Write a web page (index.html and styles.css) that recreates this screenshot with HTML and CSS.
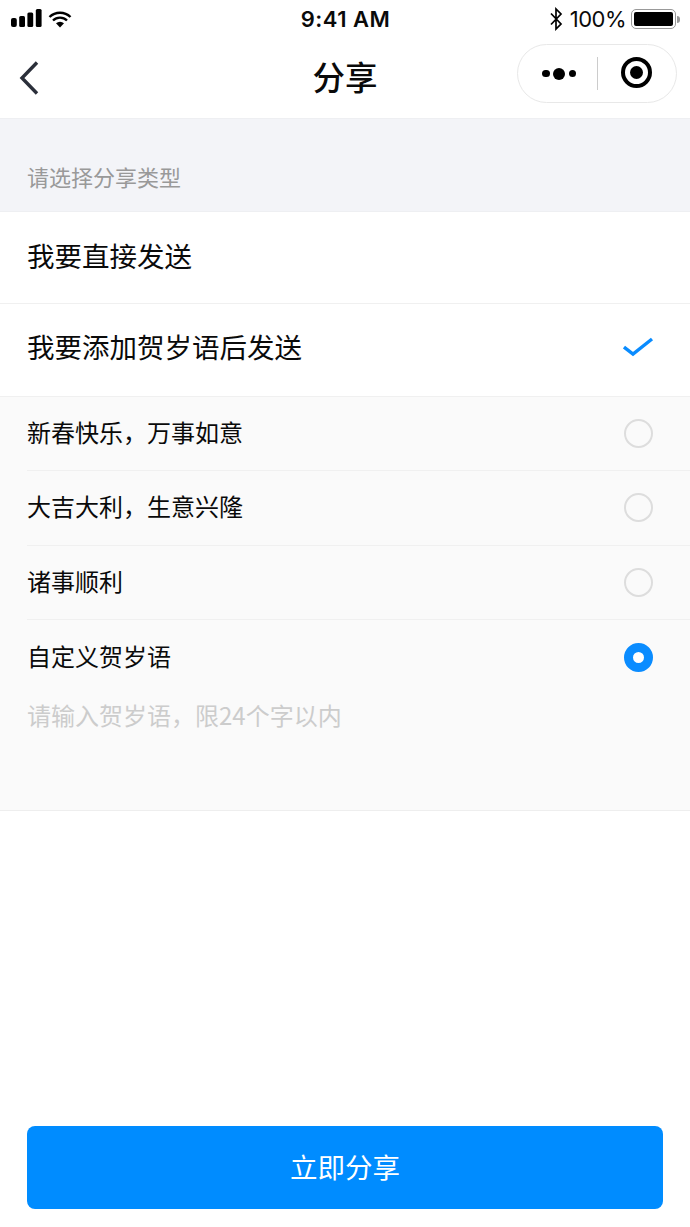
FILE: index.html
```html
<!DOCTYPE html>
<html lang="zh-CN">
<head>
<meta charset="utf-8">
<title>分享</title>
<link rel="stylesheet" href="styles.css">
</head>
<body>
<div class="page">
  <div class="status">
    <div class="status-left">
      <svg width="31" height="20" viewBox="0 0 31 20"><g fill="#000"><rect x="0" y="9" width="5.800" height="9" rx="2"/><rect x="8.200" y="7" width="5.800" height="11" rx="1.500"/><rect x="16.400" y="3.500" width="5.800" height="14.500" rx="1.500"/><rect x="24.800" y="0" width="5.800" height="18" rx="1.500"/></g></svg>
      <svg class="wifi" width="24" height="18" viewBox="0 0 24 18"><path d="M1.500 7a15 15 0 0 1 21 0M5 10.500a10 10 0 0 1 14 0" fill="none" stroke="#000" stroke-width="2.400"/><path d="M8 13.200a6 6 0 0 1 8 0L12 17.500z" fill="#000"/></svg>
    </div>
    <div class="clock">9:41 AM</div>
    <div class="status-right">
      <svg width="14" height="24" viewBox="0 0 14 24"><path d="M2 6.500l10 10.500-5 5V2l5 5L2 17.500" fill="none" stroke="#000" stroke-width="1.700"/></svg>
      <span class="pct">100%</span>
      <span class="battery"><span class="battery-fill"></span></span>
      <span class="battery-tip"></span>
    </div>
  </div>
  <div class="nav">
    <svg class="back" width="24" height="36" viewBox="0 0 24 36"><path d="M20 2.500L5 18l15 15.500" fill="none" stroke="#2b2f3a" stroke-width="3.400"/></svg>
    <h1 class="title">分享</h1>
    <div class="capsule">
      <div class="cap-dots"><i class="dot"></i><i class="dot big"></i><i class="dot"></i></div>
      <div class="cap-sep"></div>
      <div class="cap-target"><i class="target-in"></i></div>
    </div>
  </div>
  <div class="section-head">请选择分享类型</div>
  <div class="row">我要直接发送</div>
  <div class="row row-check"><span class="row-label">我要添加贺岁语后发送</span>
    <svg class="check" width="31" height="22" viewBox="0 0 31 22"><path d="M1 10l9 7L29 2" fill="none" stroke="#0a8cff" stroke-width="3.400"/></svg>
  </div>
  <div class="subs">
    <div class="sub"><div class="sub-in"><span class="sub-label">新春快乐，万事如意</span><i class="radio"></i></div></div>
    <div class="sub"><div class="sub-in"><span class="sub-label">大吉大利，生意兴隆</span><i class="radio"></i></div></div>
    <div class="sub"><div class="sub-in"><span class="sub-label">诸事顺利</span><i class="radio"></i></div></div>
    <div class="sub"><div class="sub-in sub-end"><span class="sub-label">自定义贺岁语</span><i class="radio on"></i></div></div>
    <div class="hint">请输入贺岁语，限24个字以内</div>
  </div>
  <div class="spacer"></div>
  <div class="foot"><button class="share">立即分享</button></div>
</div>
</body>
</html>
```
FILE: styles.css
```css
* { box-sizing: border-box; }
html, body { margin: 0; padding: 0; background: #fff; }
body { font-family: "Liberation Sans", "Noto Sans CJK SC", sans-serif; color: #0a0a0a; }
.page { width: 690px; height: 1227px; display: flex; flex-direction: column; overflow: hidden; }
.status { height: 38px; display: grid; grid-template-columns: 1fr auto 1fr; align-items: center; padding: 0 10px 0 11px; }
.status-left { display: flex; align-items: center; gap: 6px; }
.wifi { margin-bottom: 1px; }
.clock { font-size: 22px; font-weight: 600; letter-spacing: 0.5px; font-family: "Inter", "Liberation Sans", sans-serif; }
.status-right { display: flex; align-items: center; justify-content: flex-end; gap: 4px; }
.pct { font-size: 22px; font-family: "Inter", "Liberation Sans", sans-serif; letter-spacing: -0.5px; margin-left: 3px; }
.battery { width: 45px; height: 20px; border: 1.500px solid #999; border-radius: 5px; padding: 2px; display: block; margin-left: 1px; }
.battery-fill { display: block; width: 100%; height: 100%; background: #000; border-radius: 2px; }
.battery-tip { width: 3px; height: 7px; background: #999; border-radius: 0 3px 3px 0; margin-left: -3px; }
.nav { height: 81px; display: grid; grid-template-columns: 1fr auto 1fr; align-items: center; padding: 0 13px 0 17px; border-bottom: 1px solid #eeeff2; }
.back { display: block; margin-top: 3px; margin-bottom: 3px; }
.title { margin: -5px 4px 0 0; font-size: 32.500px; font-weight: 500; line-height: 40px; color: #0a0a0a; font-family: "Noto Sans CJK SC", sans-serif; }
.capsule { justify-self: end; width: 160px; height: 59px; border: 1px solid #e8e8e8; border-radius: 30px; display: flex; align-items: center; margin-top: -9px; background: #fff; }
.cap-dots { width: 58px; display: flex; justify-content: flex-end; align-items: center; gap: 3.500px; }
.dot { width: 7.500px; height: 7.500px; border-radius: 50%; background: #000; display: block; }
.dot.big { width: 12px; height: 12px; }
.cap-sep { width: 1px; height: 33px; background: #ccc; margin-left: 21px; }
.cap-target { margin-left: 23px; width: 31px; height: 31px; border: 4px solid #000; border-radius: 50%; display: flex; align-items: center; justify-content: center; margin-top: -2px; }
.target-in { width: 13px; height: 13px; background: #000; border-radius: 50%; display: block; }
.section-head { height: 92.500px; background: #f3f4f8; color: #999; font-size: 22px; line-height: 30px; padding: 42px 27px 0; border-bottom: 1px solid #eeeff2; font-family: "Noto Sans CJK SC", sans-serif; }
.row { height: 92.500px; display: flex; align-items: center; justify-content: space-between; padding: 0 36px 5px 27px; font-size: 27.500px; border-bottom: 1px solid #f0f0f0; font-family: "Noto Sans CJK SC", sans-serif; }
.row-label { margin-bottom: 3px; }
.check { margin-top: 2px; }
.subs { background: #fafafa; border-bottom: 1px solid #eeeeee; height: 414.500px; }
.sub { padding-left: 27px; }
.sub-in { height: 74.500px; display: flex; align-items: center; justify-content: space-between; padding-right: 37px; font-size: 24px; border-bottom: 1px solid #f0f0f0; font-family: "Noto Sans CJK SC", sans-serif; }
.sub-label { margin-bottom: 4px; }
.sub-end { border-bottom: 0; }
.radio { width: 29px; height: 29px; border: 2px solid #ddd; border-radius: 50%; display: block; background: #fafafa; }
.radio.on { border: 9.500px solid #0a8cff; background: #fff; }
.hint { padding: 2px 27px 0; font-size: 24px; line-height: 36px; color: #ccc; font-family: "Noto Sans CJK SC", sans-serif; }
.spacer { flex: 1; }
.foot { padding: 0 27px 18px 27px; }
.share { display: block; width: 100%; height: 83px; border: 0; border-radius: 8px; background: #008cff; color: #fff; font-size: 27.500px; padding-bottom: 5px; font-family: "Noto Sans CJK SC", sans-serif; }
```
